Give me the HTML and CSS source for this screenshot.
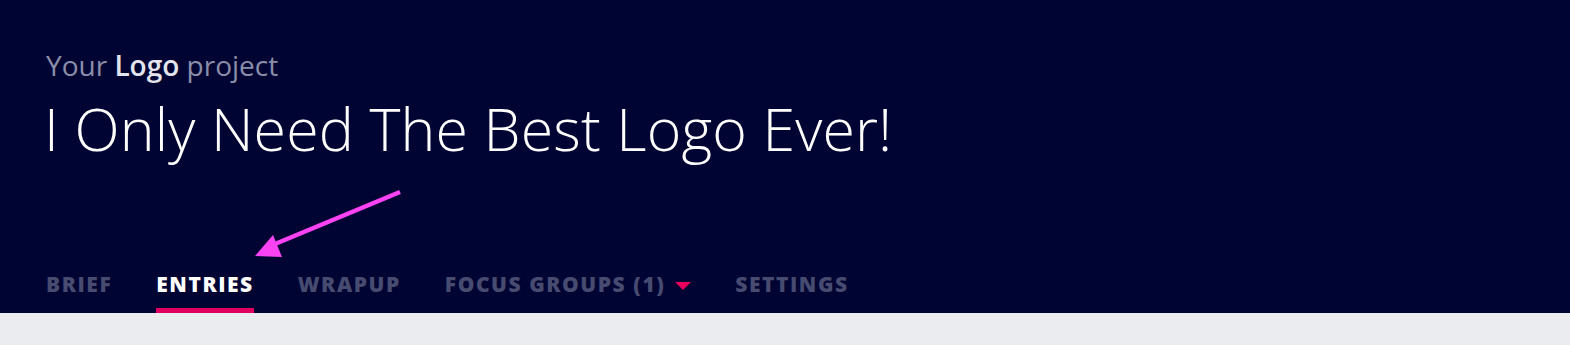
FILE: index.html
```html
<!DOCTYPE html>
<html>
<head>
<meta charset="utf-8">
<link rel="stylesheet" href="styles.css">
</head>
<body>
<header class="hero">
  <div class="eyebrow">Your <strong>Logo</strong> project</div>
  <h1 class="title">I Only Need The Best Logo Ever!</h1>
  <nav class="tabs">
    <a class="tab">BRIEF</a>
    <a class="tab active">ENTRIES</a>
    <a class="tab">WRAPUP</a>
    <a class="tab">FOCUS GROUPS (1) <span class="caret"></span></a>
    <a class="tab">SETTINGS</a>
  </nav>
  <svg class="arrow" width="170" height="80" viewBox="0 0 170 80">
    <line x1="160" y1="12" x2="35" y2="64" stroke="#fb43f3" stroke-width="4.5" stroke-linecap="butt"/>
    <polygon points="15,76 33,55 42,77" fill="#fb43f3"/>
  </svg>
</header>
<main class="content"></main>
</body>
</html>
```
FILE: styles.css
```css
html, body { margin: 0; padding: 0; }
body { background: #ebecf0; font-family: "Open Sans", "Noto Sans", sans-serif; }
.hero {
  position: relative;
  background: #000433;
  height: 313px;
  box-sizing: border-box;
  padding: 47px 0 0 46px;
  display: flex;
  flex-direction: column;
}
.eyebrow {
  color: #8b8ea8;
  font-size: 28px;
  line-height: 36px;
}
.eyebrow strong { color: #e4e5ec; font-weight: 600; }
.title {
  margin: 9px 0 0 -2px;
  color: #ffffff;
  font-weight: 300;
  font-size: 59px;
  line-height: 72px;
  letter-spacing: 0.15px;
}
.tabs {
  margin-top: auto;
  display: flex;
  gap: 44px;
}
.tab {
  color: #474b70;
  font-weight: 800;
  font-size: 21px;
  line-height: 24px;
  letter-spacing: 1.55px;
  padding: 0 0 12px;
  border-bottom: 5px solid transparent;
  display: flex;
  align-items: center;
  gap: 10px;
}
.tab.active { color: #ffffff; border-bottom-color: #e0005f; }
.caret {
  width: 0; height: 0;
  border-left: 8px solid transparent;
  border-right: 8px solid transparent;
  border-top: 8px solid #e8005f;
  margin-top: 4px;
}
.arrow { position: absolute; left: 240px; top: 180px; }
.content { height: 32px; }
```
